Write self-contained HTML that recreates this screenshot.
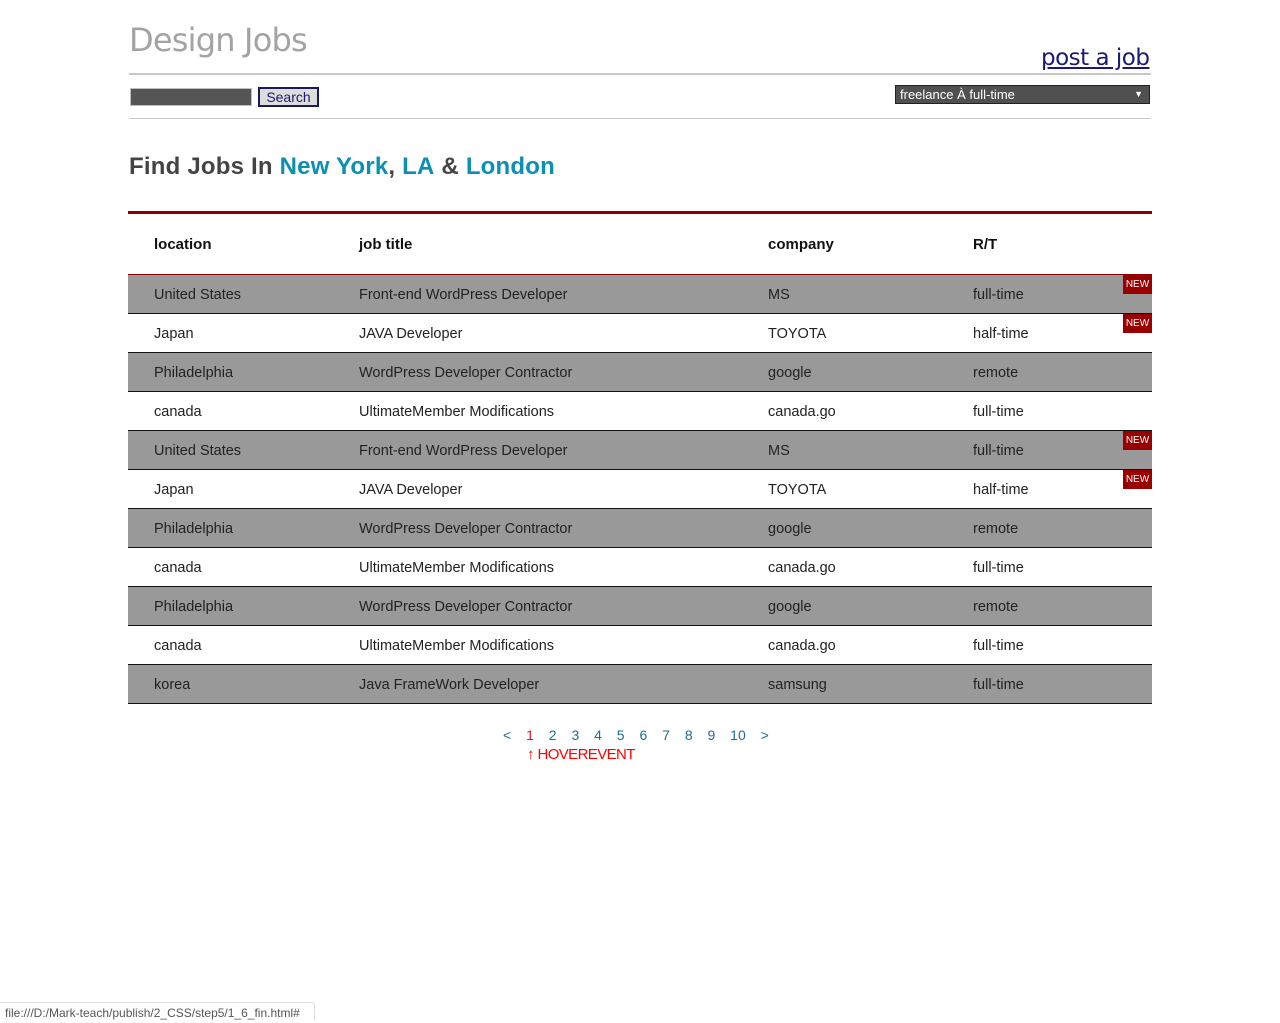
<!DOCTYPE html>
<html><head><meta charset="utf-8"><style>
*{margin:0;padding:0;box-sizing:border-box}
body{width:1280px;height:1020px;background:#fff;font-family:"Liberation Sans","Noto Sans CJK KR",sans-serif;position:relative;overflow:hidden}
.a{position:absolute}
h1{position:absolute;left:129px;top:21px;font-weight:normal;font-size:32px;color:#a3a3a3;font-family:"DejaVu Sans","Liberation Sans",sans-serif;letter-spacing:-0.8px}
.post{left:1041px;top:45px;font-size:23px;color:#1a1a6e;text-decoration:underline;font-family:"DejaVu Sans",sans-serif;letter-spacing:-0.5px}
.rule{left:129px;width:1022px;background:#c8c8c8}
.inp{left:130px;top:88px;width:122px;height:18px;background:#555;border:1px solid #c0c0c0}
.btn{left:258px;top:87px;width:61px;height:20px;background:#ddd;border:2px solid #1a1a5a;font-size:14px;color:#1a1a6e;text-align:center;line-height:16px}
.sel{left:895px;top:85px;width:255px;height:19px;background:#505050;border:1px solid #1a1a5a;color:#fff;font-size:13px;line-height:17px;padding-left:4px}
.sel span{position:absolute;right:6px;top:0;font-size:9px}
h2{position:absolute;left:129px;top:153px;font-size:24px;color:#444;font-family:"Liberation Sans",sans-serif;font-weight:bold;letter-spacing:0.2px}
h2 b{color:#0b8fb3}
table{position:absolute;left:128px;top:211px;width:1024px;border-collapse:collapse;border-top:3px solid #8b0000;font-family:"Liberation Sans",sans-serif;font-size:14.5px;color:#222}
th{height:62px;text-align:left;font-size:15px;font-weight:bold;border-bottom:1px solid #8b0000;color:#111}
td{height:39px;border-bottom:1px solid #111;position:relative;padding-top:2px}
tr.g td{background:#999}
th:nth-child(1),td:nth-child(1){padding-left:26px;width:231px}
td:nth-child(2),th:nth-child(2){width:409px}
td:nth-child(3),th:nth-child(3){width:205px}
.new{position:absolute;right:0;top:0;width:29px;height:19px;background:#990000;color:#fff;font-size:10px;line-height:19px;text-align:center;font-family:"Liberation Sans",sans-serif}
.pg{left:503px;top:727px;font-size:14px;color:#1a6f8f;font-family:"Liberation Sans",sans-serif;word-spacing:11px}
.hv{left:527px;top:746px;color:#f00;font-size:15px;letter-spacing:-0.6px}
.st{left:0;top:1002px;width:315px;height:18px;border:1px solid #ddd;border-left:none;border-bottom:none;border-radius:0 3px 0 0;background:#fff;font-size:12px;color:#555;padding-left:5px;line-height:20px}
</style></head><body>
<h1>Design Jobs</h1>
<div class="a post">post a job</div>
<div class="a rule" style="top:73px;height:2px"></div>
<div class="a inp"></div>
<div class="a btn">Search</div>
<div class="a sel">freelance À full-time<span>▼</span></div>
<div class="a rule" style="top:118px;height:1px"></div>
<h2>Find Jobs In <b>New York</b>, <b>LA</b> &amp; <b>London</b></h2>
<table>
<tr><th>location</th><th>job title</th><th>company</th><th>R/T</th></tr>
<tr class="g"><td>United States</td><td>Front-end WordPress Developer</td><td>MS</td><td>full-time<span class="new">NEW</span></td></tr>
<tr><td>Japan</td><td>JAVA Developer</td><td>TOYOTA</td><td>half-time<span class="new">NEW</span></td></tr>
<tr class="g"><td>Philadelphia</td><td>WordPress Developer Contractor</td><td>google</td><td>remote</td></tr>
<tr><td>canada</td><td>UltimateMember Modifications</td><td>canada.go</td><td>full-time</td></tr>
<tr class="g"><td>United States</td><td>Front-end WordPress Developer</td><td>MS</td><td>full-time<span class="new">NEW</span></td></tr>
<tr><td>Japan</td><td>JAVA Developer</td><td>TOYOTA</td><td>half-time<span class="new">NEW</span></td></tr>
<tr class="g"><td>Philadelphia</td><td>WordPress Developer Contractor</td><td>google</td><td>remote</td></tr>
<tr><td>canada</td><td>UltimateMember Modifications</td><td>canada.go</td><td>full-time</td></tr>
<tr class="g"><td>Philadelphia</td><td>WordPress Developer Contractor</td><td>google</td><td>remote</td></tr>
<tr><td>canada</td><td>UltimateMember Modifications</td><td>canada.go</td><td>full-time</td></tr>
<tr class="g"><td>korea</td><td>Java FrameWork Developer</td><td>samsung</td><td>full-time</td></tr>
</table>
<div class="a pg">&lt; <span style="color:#e0102a">1</span> 2 3 4 5 6 7 8 9 10 &gt;</div>
<div class="a hv">↑ HOVEREVENT</div>
<div class="a st">file:///D:/Mark-teach/publish/2_CSS/step5/1_6_fin.html#</div>
</body></html>
